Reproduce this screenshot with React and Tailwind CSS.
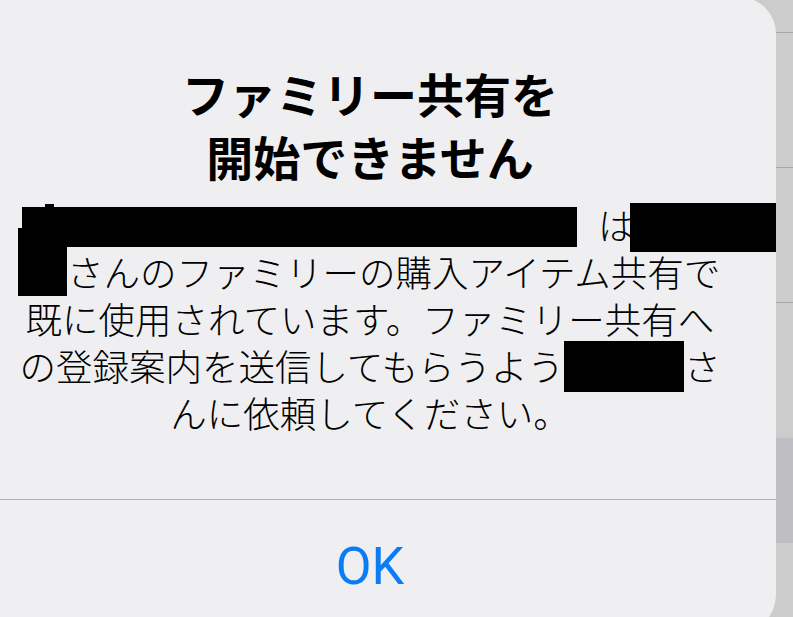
import React from 'react';

const jp = { fontFamily: '"Noto Sans CJK JP", "Noto Sans", sans-serif' };

const App = () => {
    return (
        <div className="w-[793px] h-[617px] overflow-hidden flex bg-[#cccccd]" style={jp}>
            {/* Alert panel */}
            <div className="flex-1 min-w-0 h-[636px] -mt-[3px] bg-[#efeff1] rounded-tr-[37px] rounded-br-[38px] flex flex-col">
                <div className="pt-[64px] pr-[36px]">
                    {/* Title */}
                    <div className="text-[47px] leading-[63px] font-bold text-black text-center">
                        <div>ファミリー共有を</div>
                        <div>開始できません</div>
                    </div>

                    {/* Message */}
                    <div className="mt-[14px] text-[36.5px] leading-[47px] font-light text-black">
                        <div className="h-[47px] flex items-center pl-[22px] whitespace-nowrap">
                            <span className="relative w-[555px] h-[40px] mt-[4px] bg-black flex-none">
                                <span className="absolute left-[23px] -top-[3px] w-[9px] h-[3px] bg-black"></span>
                            </span>
                            <span className="ml-[21px]">は</span>
                            <span className="-ml-[5px] w-[148px] h-[49px] mt-[5px] bg-black flex-none"></span>
                        </div>
                        <div className="h-[47px] flex pl-[18px]">
                            <span className="self-end w-[49px] h-[68px] -mb-[1px] bg-black flex-none"></span>
                            <span className="self-center whitespace-nowrap">さんのファミリーの購入アイテム共有で</span>
                        </div>
                        <div className="h-[47px] flex items-center justify-center whitespace-nowrap">
                            既に使用されています。ファミリー共有へ
                        </div>
                        <div className="h-[47px] flex items-center justify-center whitespace-nowrap">
                            <span>の登録案内を送信してもらうよう</span>
                            <span className="w-[120px] h-[51px] mt-[2px] bg-black flex-none"></span>
                            <span>さ</span>
                        </div>
                        <div className="h-[47px] flex items-center justify-center whitespace-nowrap">
                            んに依頼してください。
                        </div>
                    </div>
                </div>

                <div className="mt-[63px] h-px bg-[#b3b3b7]"></div>

                <div className="flex-1 flex items-center justify-center pr-[36px]">
                    <span className="text-[52px] leading-none text-[#0a7cf6]" style={{ fontFamily: 'Roboto, "Liberation Sans", sans-serif' }}>
                        OK
                    </span>
                </div>
            </div>

            {/* Background list peeking out on the right */}
            <div className="relative w-[17px] flex-none flex flex-col bg-[#cccccd]">
                <div className="h-[32px]"></div>
                <div className="h-px bg-[#a8a8aa]"></div>
                <div className="h-[134px]"></div>
                <div className="h-px bg-[#a8a8aa]"></div>
                <div className="h-[134px]"></div>
                <div className="h-px bg-[#a8a8aa]"></div>
                <div className="h-[135px]"></div>
                <div className="h-[105px] bg-[#bfbfc3]"></div>
            </div>
        </div>
    );
};

export default App;
